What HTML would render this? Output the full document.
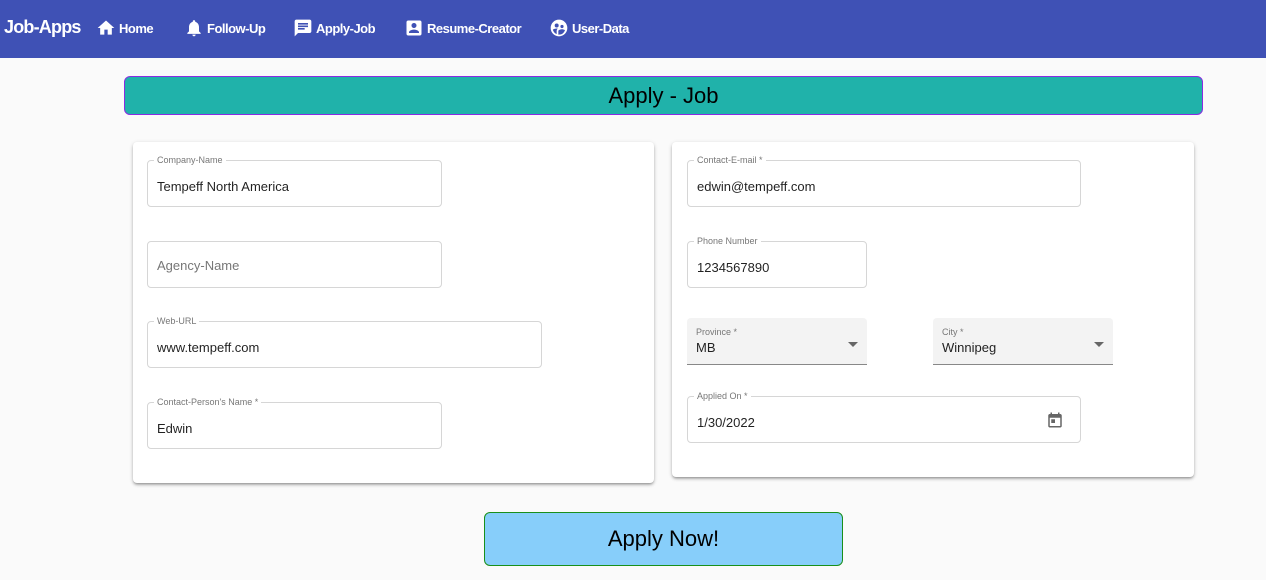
<!DOCTYPE html>
<html><head><style>
*{box-sizing:border-box;margin:0;padding:0}
body{width:1266px;height:580px;background:#fafafa;font-family:"Liberation Sans",sans-serif;position:relative;overflow:hidden;color:rgba(0,0,0,.87)}
.hdr{position:absolute;left:0;top:0;width:1266px;height:58px;background:#3f51b5;color:#fff}
.brand{position:absolute;left:4px;top:17px;font-size:18px;font-weight:bold;letter-spacing:-0.8px}
.nav{position:absolute;top:18px;font-size:13px;font-weight:bold;display:flex;align-items:center;gap:3px;letter-spacing:-0.5px}
.nav svg{width:20px;height:20px;fill:#fff}
.title{position:absolute;left:124px;top:76px;width:1079px;height:39px;background:#20b2aa;border:1px solid #8a2be2;border-radius:6px;text-align:center;font-size:22px;line-height:37px;color:#000}
.card{position:absolute;background:#fff;border-radius:4px;box-shadow:0 2px 2px -1px rgba(0,0,0,.25),0 2px 3px rgba(0,0,0,.16),0 1px 5px rgba(0,0,0,.12)}
.f{position:absolute;height:47px;border:1px solid #d6d6d6;border-radius:4px;font-size:13px}
.f .l{position:absolute;top:-6px;left:6px;background:#fff;padding:0 3px;font-size:9px;color:#777}
.f .v{position:absolute;left:9px;top:18px}
.f .p{position:absolute;left:9px;top:16px;color:#777}
.s{position:absolute;height:47px;background:#f3f3f3;border-bottom:1px solid #888;border-radius:4px 4px 0 0;font-size:13px}
.s .l{position:absolute;left:9px;top:9px;font-size:9px;color:#777}
.s .v{position:absolute;left:9px;top:22px}
.s .a{position:absolute;right:9px;top:24px;width:0;height:0;border-left:5px solid transparent;border-right:5px solid transparent;border-top:5px solid #666}
.btn{position:absolute;left:484px;top:512px;width:359px;height:54px;background:#87cefa;border:1px solid #1a8f1a;border-radius:6px;text-align:center;font-size:22px;line-height:52px;color:#000}
</style></head><body>
<div class="hdr">
<div class="brand">Job-Apps</div>
<div class="nav" style="left:96px"><svg viewBox="0 0 24 24"><path d="M10 20v-6h4v6h5v-8h3L12 3 2 12h3v8z"/></svg>Home</div>
<div class="nav" style="left:184px"><svg viewBox="0 0 24 24"><path d="M12 22c1.1 0 2-.9 2-2h-4c0 1.1.9 2 2 2zm6-6v-5c0-3.07-1.640-5.64-4.5-6.32V4c0-.83-.67-1.5-1.5-1.5s-1.5.67-1.5 1.5v.68C7.63 5.36 6 7.92 6 11v5l-2 2v1h16v-1l-2-2z"/></svg>Follow-Up</div>
<div class="nav" style="left:293px"><svg viewBox="0 0 24 24"><path d="M20 2H4c-1.1 0-2 .9-2 2v18l4-4h14c1.1 0 2-.9 2-2V4c0-1.1-.9-2-2-2zM6 9h12v2H6V9zm8 5H6v-2h8v2zm4-6H6V6h12v2z"/></svg>Apply-Job</div>
<div class="nav" style="left:404px"><svg viewBox="0 0 24 24"><path d="M3 5v14c0 1.1.89 2 2 2h14c1.1 0 2-.9 2-2V5c0-1.1-.9-2-2-2H5c-1.11 0-2 .9-2 2zm12 4c0 1.66-1.34 3-3 3s-3-1.34-3-3 1.34-3 3-3 3 1.34 3 3zm-9 8c0-2 4-3.1 6-3.1s6 1.1 6 3.1v1H6v-1z"/></svg>Resume-Creator</div>
<div class="nav" style="left:549px"><svg viewBox="0 0 24 24"><path d="M12 2C6.48 2 2 6.48 2 12s4.48 10 10 10 10-4.480 10-10S17.52 2 12 2zm3.6 6.3a1.9 1.9 0 110 3.8 1.9 1.9 0 010-3.8zM9.2 6.6a2.4 2.4 0 110 4.8 2.4 2.4 0 010-4.8zm0 9.1v3.7A8 8 0 014.6 14c1.3-.9 3.6-1.4 4.6-1.4.4 0 .8 0 1.3.1-1 .6-1.3 1.8-1.3 3zm2.8 4.3h-.8v-4.3c0-1.5 3.1-2.2 4.4-2.2.9 0 2.5.3 3.6 1A8 8 0 0112 20z"/></svg>User-Data</div>
</div>
<div class="title">Apply - Job</div>

<div class="card" style="left:133px;top:142px;width:521px;height:341px"></div>
<div class="card" style="left:672px;top:142px;width:522px;height:335px"></div>

<div class="f" style="left:147px;top:160px;width:295px"><span class="l">Company-Name</span><span class="v">Tempeff North America</span></div>
<div class="f" style="left:147px;top:241px;width:295px"><span class="p">Agency-Name</span></div>
<div class="f" style="left:147px;top:321px;width:395px"><span class="l">Web-URL</span><span class="v">www.tempeff.com</span></div>
<div class="f" style="left:147px;top:402px;width:295px"><span class="l">Contact-Person's Name *</span><span class="v">Edwin</span></div>

<div class="f" style="left:687px;top:160px;width:394px"><span class="l">Contact-E-mail *</span><span class="v">edwin@tempeff.com</span></div>
<div class="f" style="left:687px;top:241px;width:180px"><span class="l">Phone Number</span><span class="v">1234567890</span></div>
<div class="s" style="left:687px;top:318px;width:180px"><span class="l">Province *</span><span class="v">MB</span><span class="a"></span></div>
<div class="s" style="left:933px;top:318px;width:180px"><span class="l">City *</span><span class="v">Winnipeg</span><span class="a"></span></div>
<div class="f" style="left:687px;top:396px;width:394px"><span class="l">Applied On *</span><span class="v">1/30/2022</span>
<svg style="position:absolute;right:16px;top:14px;width:18px;height:18px" viewBox="0 0 24 24"><path fill="#666" d="M19 4h-1V2h-2v2H8V2H6v2H5c-1.1 0-2 .9-2 2v14c0 1.1.9 2 2 2h14c1.1 0 2-.9 2-2V6c0-1.1-.9-2-2-2zm0 16H5V9h14v11zM7 11h5v5H7z"/></svg></div>

<div class="btn">Apply Now!</div>
</body></html>
